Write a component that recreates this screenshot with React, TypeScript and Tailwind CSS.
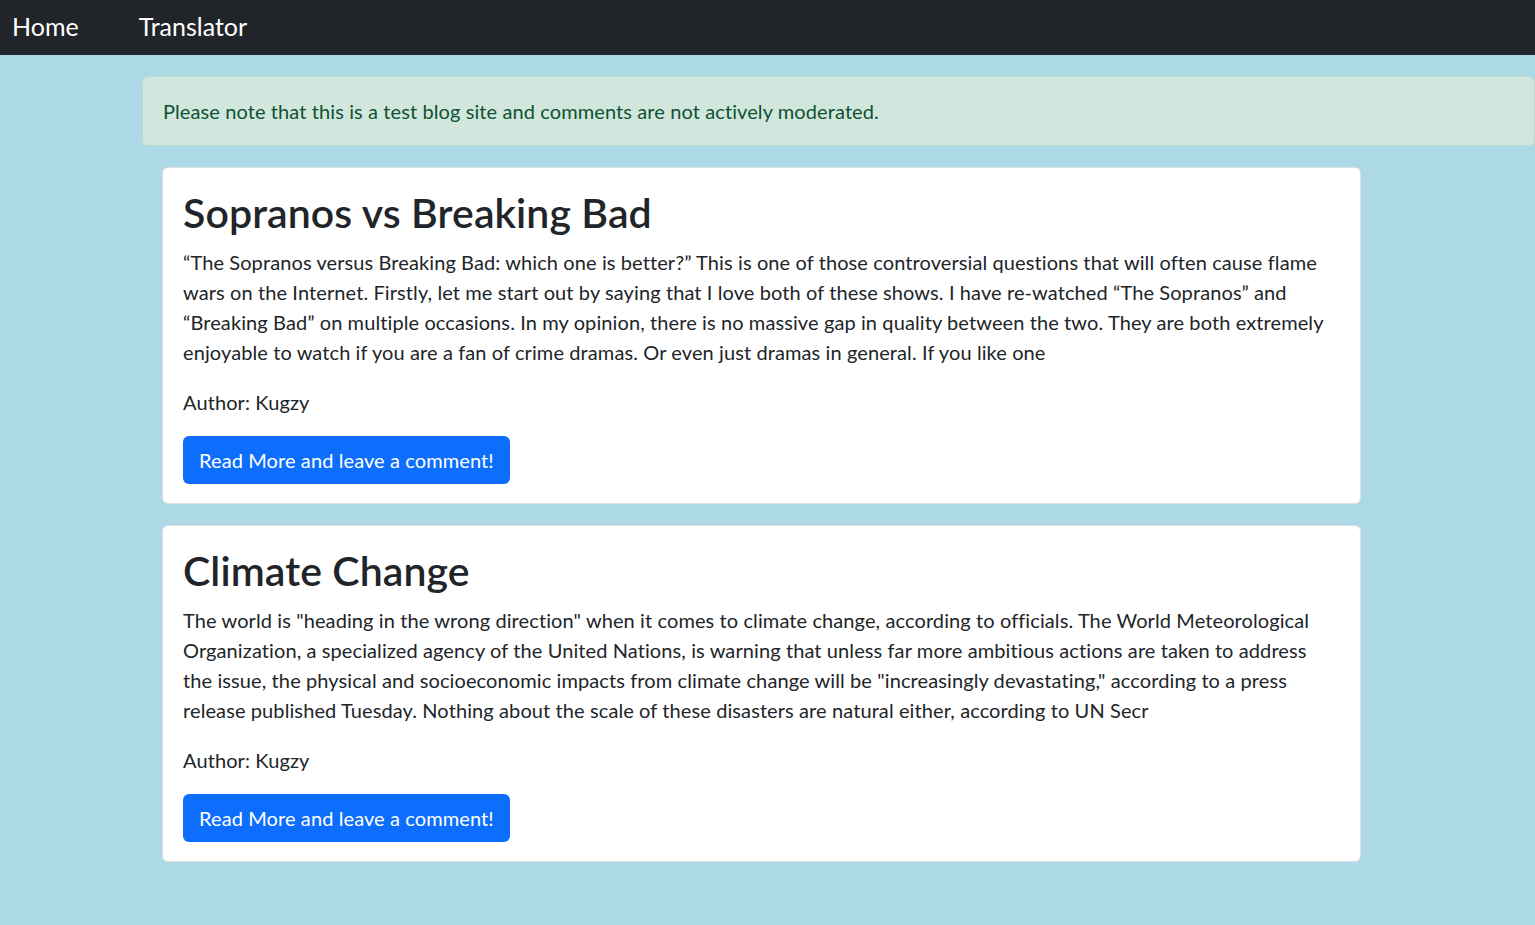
import React from "react";

type Post = { title: string; body: string; author: string };

const posts: Post[] = [
  {
    title: "Sopranos vs Breaking Bad",
    body: "\u201CThe Sopranos versus Breaking Bad: which one is better?\u201D This is one of those controversial questions that will often cause flame wars on the Internet. Firstly, let me start out by saying that I love both of these shows. I have re-watched \u201CThe Sopranos\u201D and \u201CBreaking Bad\u201D on multiple occasions. In my opinion, there is no massive gap in quality between the two. They are both extremely enjoyable to watch if you are a fan of crime dramas. Or even just dramas in general. If you like one",
    author: "Kugzy",
  },
  {
    title: "Climate Change",
    body: 'The world is "heading in the wrong direction" when it comes to climate change, according to officials. The World Meteorological Organization, a specialized agency of the United Nations, is warning that unless far more ambitious actions are taken to address the issue, the physical and socioeconomic impacts from climate change will be "increasingly devastating," according to a press release published Tuesday. Nothing about the scale of these disasters are natural either, according to UN Secr',
    author: "Kugzy",
  },
];

function PostCard({ post }: { post: Post }) {
  return (
    <div className="bg-white border border-black/[0.125] rounded-[6px] px-5 pt-[21px] pb-[19px]">
      <h1 className="text-[41px] leading-[48px] font-semibold tracking-[0.1px] mb-[10px]">{post.title}</h1>
      <p className="text-[20px] leading-[30px] tracking-[0.1px] mb-5">{post.body}</p>
      <p className="text-[20px] leading-[30px] tracking-[0.1px] mb-[19px]">Author: {post.author}</p>
      <button
        type="button"
        className="bg-[#0d6efd] text-white text-[20px] leading-[30px] tracking-[0.1px] px-4 py-[9px] rounded-[6px]"
      >
        Read More and leave a comment!
      </button>
    </div>
  );
}

export default function App() {
  return (
    <div className="min-h-screen bg-[#add8e6] text-[#212529] font-['Lato',sans-serif] overflow-x-hidden">
      <nav className="bg-[#212529] h-[55px] flex items-center text-white text-[25px] pb-[1px]">
        <a className="pl-3 pr-[60px]">Home</a>
        <a>Translator</a>
      </nav>
      <div className="pl-[142px] pt-[21px]">
        <div className="bg-[#d1e7dd] text-[#0f5132] border border-[#badbcc] rounded-[6px] h-[70px] flex items-center px-5 text-[20px] tracking-[0.1px]">
          Please note that this is a test blog site and comments are not actively moderated.
        </div>
      </div>
      <div className="w-[1199px] ml-[162px] mt-[21px] flex flex-col gap-[21px] pb-[22px]">
        {posts.map((p) => (
          <PostCard key={p.title} post={p} />
        ))}
      </div>
    </div>
  );
}
